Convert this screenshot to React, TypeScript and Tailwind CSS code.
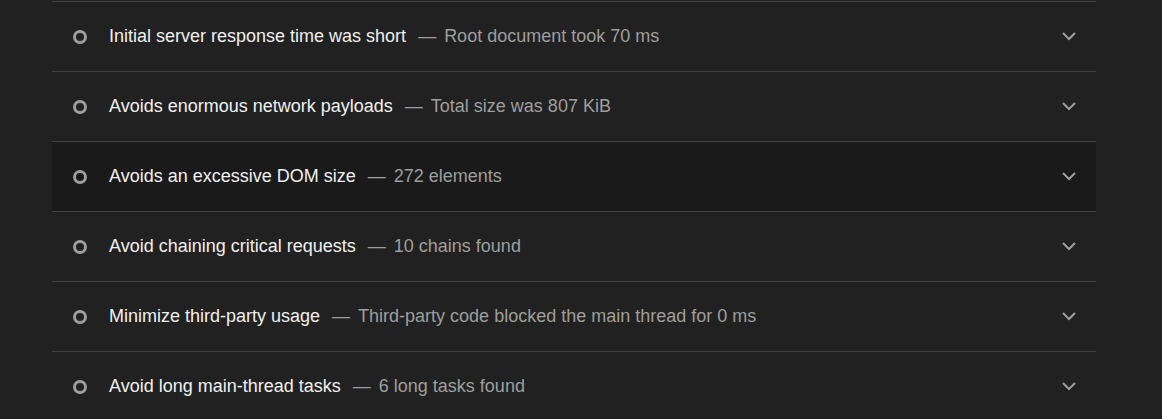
const AUDITS = [
  { title: "Initial server response time was short", detail: "Root document took 70 ms" },
  { title: "Avoids enormous network payloads", detail: "Total size was 807 KiB" },
  { title: "Avoids an excessive DOM size", detail: "272 elements", hovered: true },
  { title: "Avoid chaining critical requests", detail: "10 chains found" },
  { title: "Minimize third-party usage", detail: "Third-party code blocked the main thread for 0 ms" },
  { title: "Avoid long main-thread tasks", detail: "6 long tasks found" },
];

function Chevron() {
  return (
    <svg width="16" height="10" viewBox="0 0 16 10" fill="none" className="text-[#9e9e9e]">
      <path d="M2 2l6 6 6-6" stroke="currentColor" strokeWidth="2" />
    </svg>
  );
}

export default function App() {
  return (
    <div
      className="min-h-screen bg-[#212121] pt-px"
      style={{ fontFamily: '"Liberation Sans", Arial, sans-serif' }}
    >
      <div className="ml-[52px] w-[1044px]">
        {AUDITS.map((audit) => (
          <div
            key={audit.title}
            className={
              "flex h-[70px] items-center border-t border-[#424242] pl-[21px] pr-[19px] " +
              (audit.hovered ? "bg-[#1a1a1a]" : "")
            }
          >
            <span className="h-[14px] w-[14px] shrink-0 rounded-full border-[3px] border-[#9e9e9e]" />
            <div className="mb-[2px] flex items-center text-[18px] leading-[24px]">
              <span className="ml-[22px] text-[#f0f0f0]">{audit.title}</span>
              <span className="ml-[12px] text-[#9e9e9e]">—</span>
              <span className="ml-[8px] text-[#9e9e9e]">{audit.detail}</span>
            </div>
            <span className="ml-auto mb-[2px] flex">
              <Chevron />
            </span>
          </div>
        ))}
      </div>
    </div>
  );
}
